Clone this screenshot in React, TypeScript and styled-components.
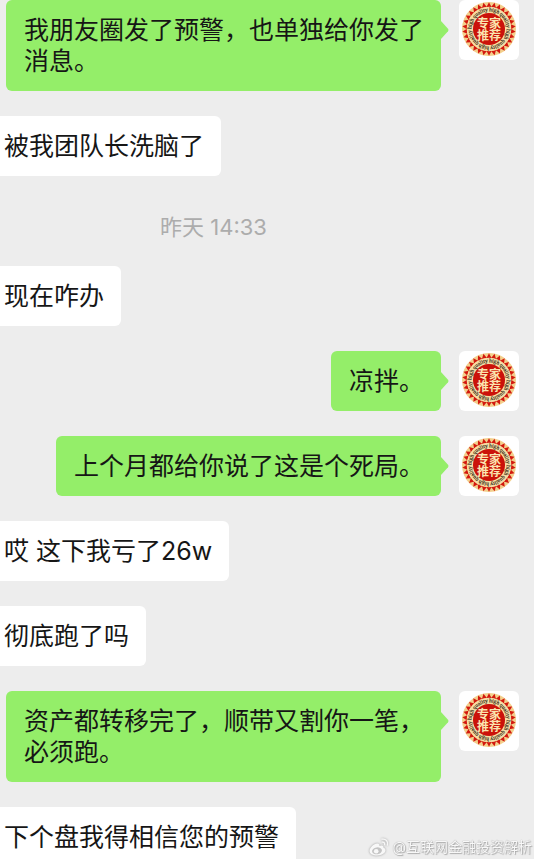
import React, { useId } from "react";
import styled, { createGlobalStyle } from "styled-components";

const GlobalStyle = createGlobalStyle`
  *, *::before, *::after { box-sizing: border-box; }
  body {
    margin: 0;
    background: #ededed;
    color: #161616;
    font-family: Inter, "Noto Sans CJK SC", sans-serif;
  }
`;

const Chat = styled.main`
  height: 100vh;
  overflow: hidden;
  display: flex;
  flex-direction: column;
  gap: 25px;
  background: #ededed;
`;

const Row = styled.article<{ $mine?: boolean }>`
  flex: none;
  display: flex;
  align-items: flex-start;
  justify-content: ${(p) => (p.$mine ? "flex-end" : "flex-start")};
  gap: 18px;
  padding: ${(p) => (p.$mine ? "0 15px 0 6px" : "0 15px 0 0")};
`;

const Bubble = styled.p<{ $mine?: boolean }>`
  position: relative;
  min-width: 0;
  margin: 0;
  padding: ${(p) => (p.$mine ? "15px 17px 14px 18px" : "15px 17px 14px 4px")};
  border-radius: ${(p) => (p.$mine ? "6px" : "0 6px 6px 0")};
  background: ${(p) => (p.$mine ? "#94ee69" : "#ffffff")};
  font-size: 25px;
  line-height: 31px;
`;

const Tail = styled.svg`
  position: absolute;
  left: 100%;
  top: 20px;
  width: 8px;
  height: 20px;
  fill: #94ee69;
`;

const Avatar = styled.div`
  flex: none;
  width: 60px;
  height: 60px;
  border-radius: 6px;
  background: #ffffff;
  overflow: hidden;

  svg { display: block; width: 100%; height: 100%; }
`;

const Time = styled.time`
  flex: none;
  padding: 12px 107px 0 0;
  color: #acacac;
  font-size: 22px;
  line-height: 28px;
  text-align: center;
`;

const Watermark = styled.footer`
  position: fixed;
  right: 2px;
  bottom: 2px;
  display: flex;
  align-items: center;
  gap: 2px;
  color: #f8f8f8;
  font-size: 14px;
  line-height: 20px;
  text-shadow: 0 0 1px #8c8c8c, 1px 1px 1px #b0b0b0;

  svg { width: 22px; height: 20px; filter: drop-shadow(0 0 1px #999999); }
`;

const TEETH = Array.from({ length: 30 }, (_, i) => (i * 360) / 30);
const QUARTERS = [0, 25, 50, 75];

function Badge() {
  const ring = useId();
  return (
    <svg viewBox="0 0 60 60" role="img" aria-label="专家推荐">
      <circle cx="30" cy="29" r="27" fill="#f3cf8c" />
      {TEETH.map((angle) => (
        <path key={angle} d="M27.5 7 L30 2.2 L32.5 7 Z" fill="#d3180e" transform={`rotate(${angle} 30 29)`} />
      ))}
      <circle cx="30" cy="29" r="22.3" fill="#f6dca4" />
      <circle cx="30" cy="29" r="16" fill="#cb120a" />
      <path id={ring} d="M30 46.600 A17.600 17.600 0 0 1 30 11.400 A17.600 17.600 0 0 1 30 46.600" fill="none" />
      <g fontFamily="Liberation Serif, serif" fontSize="5.5" fill="#2c1c10" stroke="#2c1c10" strokeWidth="0.15">
        {QUARTERS.map((start) => (
          <React.Fragment key={start}>
            <text>
              <textPath href={`#${ring}`} startOffset={`${start}%`}>high</textPath>
            </text>
            <text>
              <textPath href={`#${ring}`} startOffset={`${start + 10}%`}>quality</textPath>
            </text>
          </React.Fragment>
        ))}
      </g>
      <g fontFamily="Noto Sans CJK SC, sans-serif" fontWeight="700" fontSize="12" fill="#fbe5b0" textAnchor="middle">
        <text x="30" y="28">专家</text>
        <text x="30" y="40">推荐</text>
      </g>
    </svg>
  );
}

function WeiboMark() {
  return (
    <svg viewBox="0 0 22 20" aria-hidden="true">
      <path
        d="M9 6.5C6 6.8 1.5 10.5 1.5 14c0 3 3.500 4.500 7.500 4.500 5 0 8.500-2.600 8.500-5.200 0-1.600-1.200-2.300-2.200-2.700.6-1.700-.8-2.900-3.800-1.700.4-1.500-.6-2.600-2.500-2.400Z"
        fill="#f8f8f8"
      />
      <ellipse cx="9" cy="13.800" rx="5" ry="3.400" fill="#c4c4c4" transform="rotate(-8 9 13.800)" />
      <circle cx="8.200" cy="14.200" r="2.300" fill="#f8f8f8" />
      <path d="M14 2.200c3.800-.7 6.400 2.200 5.400 5.800M14.200 5.200c1.700-.3 2.800.9 2.400 2.500" fill="none" stroke="#f8f8f8" strokeWidth="1.300" strokeLinecap="round" />
    </svg>
  );
}

function Message({ text, mine }: { text: string; mine?: boolean }) {
  return (
    <Row $mine={mine}>
      <Bubble $mine={mine}>
        {text}
        {mine && (
          <Tail viewBox="0 0 8 20" aria-hidden="true">
            <path d="M0 1 L7 8.800 Q8 10 7 11.200 L0 19 Z" />
          </Tail>
        )}
      </Bubble>
      {mine && (
        <Avatar>
          <Badge />
        </Avatar>
      )}
    </Row>
  );
}

export default function App() {
  return (
    <>
      <GlobalStyle />
      <Chat>
        <Message mine text="我朋友圈发了预警，也单独给你发了消息。" />
        <Message text="被我团队长洗脑了" />
        <Time>昨天 14:33</Time>
        <Message text="现在咋办" />
        <Message mine text="凉拌。" />
        <Message mine text="上个月都给你说了这是个死局。" />
        <Message text="哎 这下我亏了26w" />
        <Message text="彻底跑了吗" />
        <Message mine text="资产都转移完了，顺带又割你一笔，必须跑。" />
        <Message text="下个盘我得相信您的预警" />
      </Chat>
      <Watermark>
        <WeiboMark />
        <span>@互联网金融投资解析</span>
      </Watermark>
    </>
  );
}
